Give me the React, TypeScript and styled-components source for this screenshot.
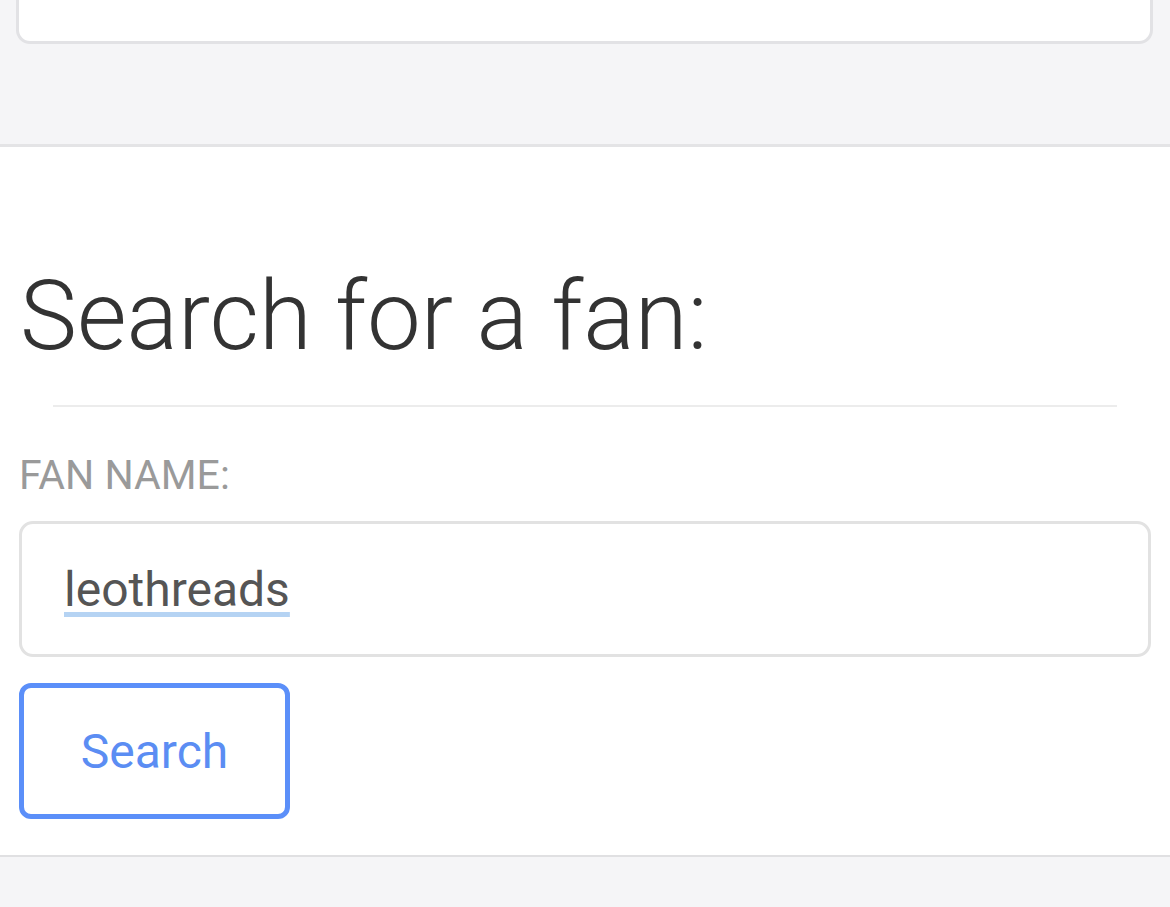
import React, { useState } from "react";
import styled, { createGlobalStyle } from "styled-components";

const GlobalStyle = createGlobalStyle`
  html, body {
    margin: 0;
    padding: 0;
    background-color: #f5f5f7;
    font-family: Roboto, "Liberation Sans", sans-serif;
  }
`;

const Page = styled.div`
  display: flex;
  flex-direction: column;
  min-height: 907px;
`;

const TopArea = styled.div`
  height: 144px;
  padding: 0 17px 0 16px;
  box-sizing: border-box;
`;

const PreviousCard = styled.div`
  height: 44px;
  box-sizing: border-box;
  background-color: #ffffff;
  border: 3px solid #e2e2e5;
  border-top: none;
  border-radius: 0 0 14px 14px;
`;

const Section = styled.section`
  background-color: #ffffff;
  border-top: 3px solid #e4e4e6;
  border-bottom: 2px solid #e0e0e2;
  padding: 112px 19px 36px;
  display: flex;
  flex-direction: column;
`;

const Heading = styled.h1`
  margin: 0;
  font-size: 96px;
  font-weight: 300;
  line-height: 1.2;
  color: #333333;
  padding-left: 1px;
`;

const Rule = styled.hr`
  border: none;
  height: 2px;
  background-color: #ececec;
  margin: 31px 34px 44px 34px;
`;

const Label = styled.label`
  font-size: 41px;
  line-height: 1.2;
  color: #9a9a9a;
  text-transform: uppercase;
`;

const TextInput = styled.input`
  margin-top: 21px;
  height: 136px;
  box-sizing: border-box;
  border: 3px solid #e2e2e2;
  border-radius: 14px;
  padding: 0 40px 0 42px;
  font-family: Roboto, "Liberation Sans", sans-serif;
  font-size: 48px;
  color: #555555;
  background-color: #ffffff;
  outline: none;
  text-decoration: underline;
  text-decoration-color: #b5d3f3;
  text-decoration-thickness: 5px;
  text-underline-offset: 6px;
`;

const SearchButton = styled.button`
  margin-top: 26px;
  align-self: flex-start;
  width: 271px;
  height: 136px;
  box-sizing: border-box;
  border: 5px solid #5b8ff9;
  border-radius: 12px;
  background-color: #ffffff;
  color: #5b8df3;
  font-family: Roboto, "Liberation Sans", sans-serif;
  font-size: 48px;
  cursor: pointer;
`;

function App() {
  const [fanName, setFanName] = useState("leothreads");

  return (
    <Page>
      <GlobalStyle />
      <TopArea>
        <PreviousCard />
      </TopArea>
      <Section>
        <Heading>Search for a fan:</Heading>
        <Rule />
        <Label htmlFor="fan-name">Fan name:</Label>
        <TextInput
          id="fan-name"
          value={fanName}
          onChange={(e) => setFanName(e.target.value)}
        />
        <SearchButton>Search</SearchButton>
      </Section>
    </Page>
  );
}

export default App;
